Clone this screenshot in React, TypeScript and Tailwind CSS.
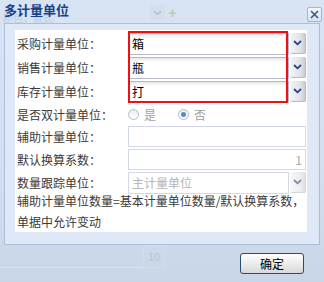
import React from "react";

const font = "font-['Noto_Sans_CJK_SC','Noto_Sans',sans-serif]";

function Chevron({ color = "#27467c" }: { color?: string }) {
  return (
    <svg width="9" height="6" viewBox="0 0 9 6" aria-hidden="true">
      <path d="M1 1 L4.5 4.3 L8 1" fill="none" stroke={color} strokeWidth="1.8" />
    </svg>
  );
}

function Trigger({ disabled }: { disabled?: boolean }) {
  return (
    <div
      className={`ml-[1px] flex h-[21px] w-[16px] items-center justify-center rounded-[2px] border-b border-r border-[#b8bcc8] bg-[linear-gradient(to_right,#f4f5f7,#dfe1e5_70%,#c9ccd2)] ${
        disabled ? "opacity-60" : ""
      }`}
    >
      <Chevron />
    </div>
  );
}

function Combo({ value, disabled }: { value: string; disabled?: boolean }) {
  return (
    <div className="flex h-[22px] w-[178px]">
      <div
        className={`flex h-[22px] w-[161px] items-center border pl-[3px] ${
          disabled
            ? "border-[#d2d9e4] bg-white text-[#b4b4b4]"
            : "border-[#b5b8c8] bg-[linear-gradient(to_bottom,#e6e6e6,#ffffff_4px)] text-black"
        }`}
      >
        {value}
      </div>
      <Trigger disabled={disabled} />
    </div>
  );
}

function Row({ label, children }: { label: string; children: React.ReactNode }) {
  return (
    <div className="flex h-[22px] items-center">
      <div className="w-[113px] pl-[2px] text-[#3a3a3a]">{label}</div>
      {children}
    </div>
  );
}

function Radio({ checked }: { checked?: boolean }) {
  return (
    <span className="flex h-[11px] w-[11px] items-center justify-center rounded-full border border-[#b3bccb] bg-[linear-gradient(to_bottom,#e9edf3,#ffffff)]">
      {checked && <span className="h-[5px] w-[5px] rounded-full bg-[#5b87c4]" />}
    </span>
  );
}

export default function App() {
  return (
    <div
      className={`relative h-[282px] w-[324px] overflow-hidden bg-[linear-gradient(to_bottom,#d8e4f3,#d3dfee_60%,#c9d6e7)] text-[12px] ${font}`}
    >
      {/* faint page content behind the window */}
      <div className="pointer-events-none absolute left-[3px] top-[12px] text-[10px] leading-[12px] text-[#c2ccda]">颜色，款式</div>
      <div className="pointer-events-none absolute left-[150px] top-[5px] flex h-[15px] w-[15px] items-center justify-center rounded-[2px] bg-[#d4dce8] opacity-70">
        <Chevron color="#aab6c8" />
      </div>
      <div className="pointer-events-none absolute left-[168px] top-[5px] text-[15px] font-bold leading-[15px] text-[#b6d3b0]">+</div>
      <div className="pointer-events-none absolute left-[143px] top-[245px] flex h-[23px] w-[22px] items-center justify-center border border-[#d3dde9] text-[11px] text-[#b9c5d4]">
        10
      </div>
      <div className="pointer-events-none absolute left-0 top-[267px] h-px w-[143px] bg-[#d9e2ee]" />

      {/* title bar */}
      <div className="relative flex h-[23px] items-start justify-between pl-[4px] pr-[2px] pt-[2px]">
        <span className="text-[13px] font-bold leading-[15px] text-[#15428b]">多计量单位</span>
        <button
          type="button"
          className="mt-[5px] flex h-[15px] w-[15px] items-center justify-center rounded-[2px] border border-[#9fb6d6] bg-[linear-gradient(to_bottom,#f3f7fc,#d6e2f2)]"
          aria-label="close"
        >
          <svg width="9" height="9" viewBox="0 0 9 9" aria-hidden="true">
            <path d="M1 1 L8 8 M8 1 L1 8" stroke="#2f5aa0" strokeWidth="1.6" />
          </svg>
        </button>
      </div>

      {/* body */}
      <div className="relative mx-[4px] h-[222px] border border-[#a9bfdc] bg-[#dfe8f6] pl-[10px] pt-[6px]">
        <div className="relative flex h-[202px] w-[292px] flex-col gap-[2px] bg-white pt-[3px]">
          <Row label="采购计量单位：">
            <Combo value="箱" />
          </Row>
          <Row label="销售计量单位：">
            <Combo value="瓶" />
          </Row>
          <Row label="库存计量单位：">
            <Combo value="打" />
          </Row>
          <Row label="是否双计量单位：">
            <div className="flex items-center text-[#a0a0a0]">
              <Radio />
              <span className="ml-[5px]">是</span>
              <span className="ml-[22px]">
                <Radio checked />
              </span>
              <span className="ml-[5px]">否</span>
            </div>
          </Row>
          <Row label="辅助计量单位：">
            <div className="h-[21px] w-[178px] border border-[#d2d9e4] bg-white" />
          </Row>
          <Row label="默认换算系数：">
            <div className="flex h-[21px] w-[178px] items-center justify-end border border-[#d2d9e4] bg-white pr-[3px] text-[#a8a8a8]">
              1
            </div>
          </Row>
          <Row label="数量跟踪单位：">
            <Combo value="主计量单位" disabled />
          </Row>
          <div className="-mt-[6px] pl-[2px] leading-[21px] text-[#3a3a3a]">
            辅助计量单位数量=基本计量单位数量/默认换算系数，
            <br />
            单据中允许变动
          </div>

          {/* red annotation box */}
          <div className="pointer-events-none absolute left-[113px] top-[1px] h-[72px] w-[160px] border-2 border-[#ee1111]" />
        </div>
      </div>

      {/* footer */}
      <div className="flex justify-end pr-[20px] pt-[8px]">
        <button
          type="button"
          className="flex h-[21px] w-[64px] items-center justify-center rounded-[3px] border border-[#2c4a75] bg-[linear-gradient(to_bottom,#ffffff,#ececec_50%,#d8d8d8)] text-[12px] text-black"
        >
          确定
        </button>
      </div>
    </div>
  );
}
